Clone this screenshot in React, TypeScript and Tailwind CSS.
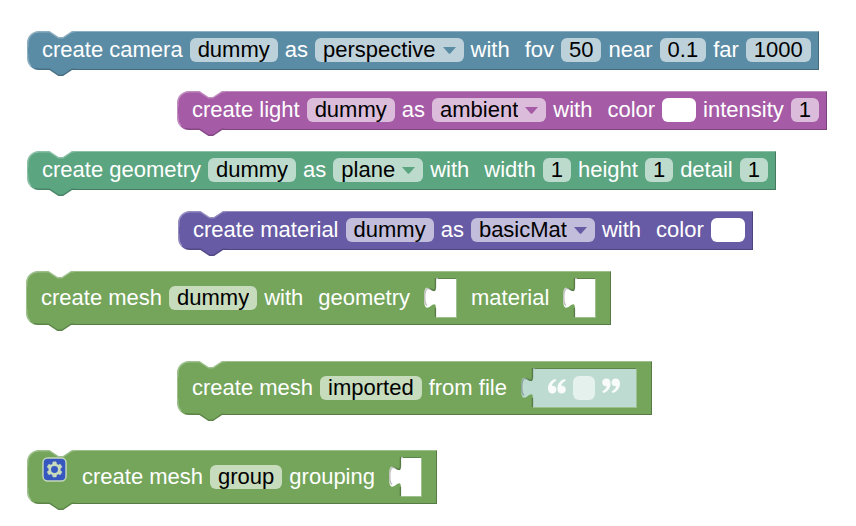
import { useId, type ReactNode } from "react";

/* Left end of a block: rounded corners, notch on top, tab below. */
function BlockShape() {
  return (
    <div aria-hidden="true" className="pointer-events-none absolute inset-0 flex">
      <div className="flex w-12 shrink-0 flex-col">
        <svg className="block h-4 w-12 shrink-0" viewBox="0 0 48 16">
          <path className="fill-current" d="M0 16V12A12 12 0 0 1 12 0H22.500L31.500 6H36L45 0H48V16Z" />
          <path
            className="fill-none stroke-white/30"
            strokeWidth="1.500"
            d="M0.750 16V12A11.250 11.250 0 0 1 12 0.750H22.500L31.500 6.750H36L45 0.750H48"
          />
        </svg>
        <div className="flex-1 border-l border-white/30 bg-current bg-clip-border" />
        <svg className="-mb-[6px] block h-[22px] w-12 shrink-0" viewBox="0 0 48 22">
          <path className="fill-current" d="M0 0V4A12 12 0 0 0 12 16H22.500L31.500 22H36L45 16H48V0Z" />
          <path className="fill-none stroke-white/30" strokeWidth="1.500" d="M0.750 0V4A11.250 11.250 0 0 0 4 12" />
          <path
            className="fill-none stroke-black/20"
            strokeWidth="1.500"
            d="M8 14.500L12 15.250H22.500L31.500 21.250H36L45 15.250H48"
          />
        </svg>
      </div>
      <div className="relative flex-1 bg-current">
        <div className="absolute inset-0 border-r border-b border-black/25" />
        <div className="absolute inset-x-0 top-0 border-t border-white/30" />
      </div>
    </div>
  );
}

function Block({ className, children }: { className: string; children: ReactNode }) {
  return (
    <section className={`absolute w-max ${className}`}>
      <BlockShape />
      <div className="relative flex items-center gap-[7px] pt-[7px] pr-2 pl-[15px]">{children}</div>
    </section>
  );
}

function Word({ children }: { children: ReactNode }) {
  return <span className="whitespace-pre text-white">{children}</span>;
}

type FieldProps = { label: string; value: string; first?: boolean };

function FieldLabel({ id, label, first }: { id: string; label: string; first?: boolean }) {
  return (
    <label htmlFor={id} className={`whitespace-pre text-white ${first ? "ml-2" : ""}`}>
      {label}
    </label>
  );
}

function TextField({ label, value, first }: FieldProps) {
  const id = useId();
  return (
    <>
      <FieldLabel id={id} label={label} first={first} />
      <input
        id={id}
        type="text"
        defaultValue={value}
        className="field-sizing-content h-6 rounded-md bg-white/60 px-2 text-black outline-none"
      />
    </>
  );
}

function SelectField({ label, value }: FieldProps) {
  const id = useId();
  return (
    <>
      <FieldLabel id={id} label={label} />
      <div className="relative flex">
        <select
          id={id}
          defaultValue={value}
          className="field-sizing-content h-6 appearance-none rounded-md bg-white/60 pr-7 pl-2 text-black outline-none"
        >
          <option value={value}>{value}</option>
        </select>
        <svg
          aria-hidden="true"
          className="pointer-events-none absolute top-[9px] right-2 h-[7px] w-[13px] fill-current"
          viewBox="0 0 13 7"
        >
          <path d="M0 0H13L7.500 6.300Q6.500 7.300 5.500 6.300Z" />
        </svg>
      </div>
    </>
  );
}

function ColorField({ label, first }: { label: string; first?: boolean }) {
  const id = useId();
  return (
    <>
      <FieldLabel id={id} label={label} first={first} />
      <input
        id={id}
        type="color"
        defaultValue="#ffffff"
        className="h-6 w-[34px] appearance-none overflow-hidden rounded-md bg-white p-0 [&::-webkit-color-swatch]:border-0 [&::-webkit-color-swatch-wrapper]:p-0"
      />
    </>
  );
}

/* Opening for a value block, with the puzzle tab on its left side. */
function Socket({ fill, children }: { fill: string; children?: ReactNode }) {
  return (
    <div className="mx-[7px] flex h-10">
      <svg aria-hidden="true" className="block h-10 w-[14px] shrink-0" viewBox="0 0 14 40">
        <path className={fill} d="M12 0V8.500C12 23.500 0 -3.500 0 19.750S12 16 12 31V40H14V0Z" />
        <path
          className="fill-none stroke-black/25"
          strokeWidth="1.500"
          d="M14 0.500H11.500V8.500C11.500 20 0.750 0 0.750 19.750Q0.750 26 3 27.500M11.500 30V39"
        />
        <path className="fill-none stroke-[#9ec08c]" d="M12 39.500H14" />
      </svg>
      <div
        className={`flex min-w-[19px] items-center border-t border-r border-b border-t-[#5d8449] border-r-[#9ec08c] border-b-[#9ec08c] ${
          children ? "bg-[#bddbd1] pr-4 pl-[13px]" : "bg-white"
        }`}
      >
        {children}
      </div>
    </div>
  );
}

function Quote({ className }: { className: string }) {
  return (
    <svg aria-hidden="true" className={`mb-1 size-[18px] shrink-0 fill-white/90 ${className}`} viewBox="0 0 18 18">
      <path d="M7.500 2C3 3.200 0 6.800 0 11.500C0 14.600 1.700 16.500 4.200 16.500C6.600 16.500 8.400 14.900 8.400 12.500C8.400 10.200 6.700 8.700 4.600 8.700C4.300 8.700 4 8.700 3.800 8.800C4.200 6.700 5.700 5 8.300 3.800Z" />
      <path d="M16.900 2C12.400 3.200 9.400 6.800 9.400 11.500C9.400 14.600 11.100 16.500 13.600 16.500C16 16.500 17.800 14.900 17.800 12.500C17.800 10.200 16.100 8.700 14 8.700C13.700 8.700 13.400 8.700 13.200 8.800C13.600 6.700 15.100 5 17.700 3.800Z" />
    </svg>
  );
}

function MutatorButton() {
  return (
    <button type="button" aria-label="Edit inputs" className="mr-2 block size-[25px] self-start">
      <svg className="block size-[25px]" viewBox="-0.333 -0.333 16.666 16.666">
        <rect x="0.300" y="0.300" width="15.400" height="15.400" rx="3.200" className="fill-[#3557bf] stroke-[#c3d7ba]" strokeWidth="1" />
        <path
          className="fill-[#c8dbbd] stroke-[#c8dbbd]"
          strokeWidth="0.300"
          d="m4.203,7.296 0,1.368 -0.920,0.677 -0.110,0.410 0.900,1.559 0.410,0.110 1.043,-0.457 1.187,0.683 0.127,1.134 0.300,0.300 1.800,0 0.300,-0.299 0.127,-1.138 1.185,-0.682 1.046,0.458 0.409,-0.110 0.900,-1.559 -0.110,-0.410 -0.920,-0.677 0,-1.366 0.920,-0.677 0.110,-0.410 -0.900,-1.559 -0.409,-0.109 -1.046,0.458 -1.185,-0.682 -0.127,-1.138 -0.300,-0.299 -1.800,0 -0.300,0.300 -0.126,1.135 -1.187,0.682 -1.043,-0.457 -0.410,0.110 -0.899,1.559 0.108,0.409z"
        />
        <circle cx="8" cy="8" r="2.300" className="fill-[#3557bf]" />
      </svg>
    </button>
  );
}

export default function App() {
  return (
    <main className="relative min-h-screen bg-white font-['Liberation_Sans',Arial,sans-serif] text-[22px] leading-6">
      <Block className="top-[31px] left-[27px] pb-2 text-[#5b8ca5]">
        <TextField label="create camera" value="dummy" />
        <SelectField label="as" value="perspective" />
        <Word>with</Word>
        <TextField label="fov" value="50" first />
        <TextField label="near" value="0.1" />
        <TextField label="far" value="1000" />
      </Block>

      <Block className="top-[91px] left-[177px] pb-2 text-[#a55ba5]">
        <TextField label="create light" value="dummy" />
        <SelectField label="as" value="ambient" />
        <Word>with</Word>
        <ColorField label="color" first />
        <TextField label="intensity" value="1" />
      </Block>

      <Block className="top-[151px] left-[27px] pb-2 text-[#5ba580]">
        <TextField label="create geometry" value="dummy" />
        <SelectField label="as" value="plane" />
        <Word>with</Word>
        <TextField label="width" value="1" first />
        <TextField label="height" value="1" />
        <TextField label="detail" value="1" />
      </Block>

      <Block className="top-[211px] left-[178px] pb-2 text-[#675ba5]">
        <TextField label="create material" value="dummy" />
        <SelectField label="as" value="basicMat" />
        <Word>with</Word>
        <ColorField label="color" first />
      </Block>

      <Block className="top-[271px] left-[26px] pb-[7px] text-[#74a55b]">
        <TextField label="create mesh" value="dummy" />
        <Word>with</Word>
        <span className="ml-2 text-white">geometry</span>
        <Socket fill="fill-white" />
        <Word>material</Word>
        <Socket fill="fill-white" />
      </Block>

      <Block className="top-[361px] left-[177px] pb-[7px] text-[#74a55b]">
        <TextField label="create mesh" value="imported" />
        <Word>from file</Word>
        <Socket fill="fill-[#bddbd1]">
          <Quote className="" />
          <input
            type="text"
            aria-label="file"
            defaultValue=""
            className="mx-[7px] h-6 w-[22px] rounded-md bg-white/60 px-2 text-black outline-none"
          />
          <Quote className="rotate-180" />
        </Socket>
      </Block>

      <Block className="top-[450px] left-[27px] pb-[7px] text-[#74a55b]">
        <MutatorButton />
        <TextField label="create mesh" value="group" />
        <Word>grouping</Word>
        <Socket fill="fill-white" />
      </Block>
    </main>
  );
}
